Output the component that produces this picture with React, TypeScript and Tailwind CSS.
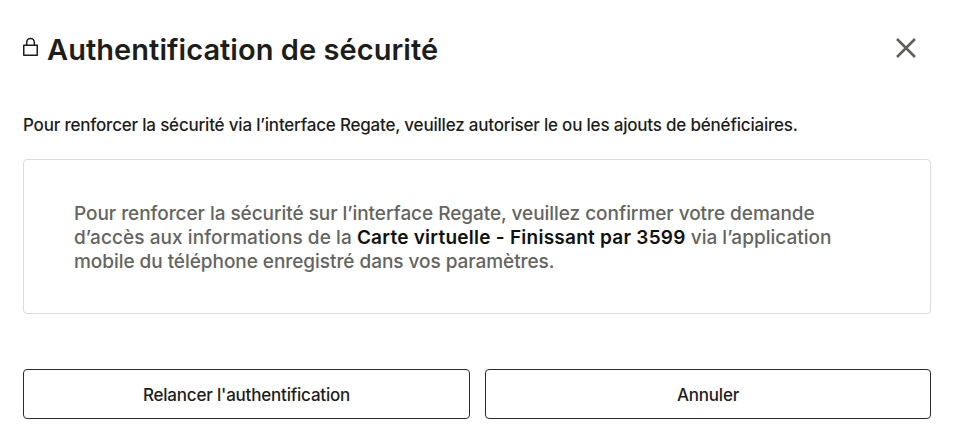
export default function App() {
  return (
    <main className="flex h-[440px] w-[956px] flex-col overflow-hidden bg-white pl-[23px] pr-[25px] font-['Inter','Liberation_Sans',sans-serif] text-[#1d1d1b]">
      <header className="flex h-[72px] items-start justify-between pt-[32px]">
        <div className="flex items-start">
          <svg className="mt-[5px] h-[20px] w-[16px]" viewBox="0 0 16 20" fill="none" stroke="#1d1d1b" strokeWidth="1.5">
            <path d="M.75 8.25h13.5v10H.75z" strokeLinejoin="round" />
            <path d="M3.7 8V5.2a3.8 3.8 0 0 1 7.6 0V8" />
          </svg>
          <h1 className="ml-[8px] whitespace-nowrap text-[29px] font-semibold leading-[36px] tracking-[0.05px]">Authentification de sécurité</h1>
        </div>
        <button aria-label="Fermer" className="mr-[14px] mt-[5px]">
          <svg className="h-[22px] w-[22px]" viewBox="0 0 22 22" fill="none" stroke="#5f5f5b" strokeWidth="2.6">
            <path d="M2 2 20 20M20 2 2 20" />
          </svg>
        </button>
      </header>
      <p className="mt-[41px] whitespace-nowrap text-[17px] font-medium leading-[24px] tracking-[-0.2px]">
        <span>Pour renforcer la sécurité via l’interface Regate, veuillez autoriser le ou les ajouts de bénéficiaires.</span>
      </p>
      <section className="mt-[22px] flex h-[155px] shrink-0 flex-col rounded-[4px] border border-[#dcdcdc] pl-[50px] pt-[42px] text-[19px] font-medium leading-[24px] text-[#646460]">
        <div className="whitespace-nowrap tracking-[-0.05px]"><span>Pour renforcer la sécurité sur l’interface Regate, veuillez confirmer votre demande</span></div>
        <div className="whitespace-nowrap">
          <span className="tracking-[0.07px]">d’accès aux informations de la </span>
          <strong className="font-semibold tracking-[0.25px] text-[#111]">Carte virtuelle - Finissant par 3599</strong>
          <span className="tracking-[0.01px]"> via l’application</span>
        </div>
        <div className="whitespace-nowrap tracking-[-0.05px]"><span>mobile du téléphone enregistré dans vos paramètres.</span></div>
      </section>
      <footer className="mt-[55px] grid h-[50px] shrink-0 grid-cols-[447px_446px] gap-[15px] text-[17px] font-medium leading-[24px] tracking-[-0.2px]">
        <button className="rounded-[4px] border border-[#2b2b2b] pt-[2px]"><span>Relancer l'authentification</span></button>
        <button className="rounded-[4px] border border-[#2b2b2b] pt-[2px]"><span>Annuler</span></button>
      </footer>
    </main>
  );
}
